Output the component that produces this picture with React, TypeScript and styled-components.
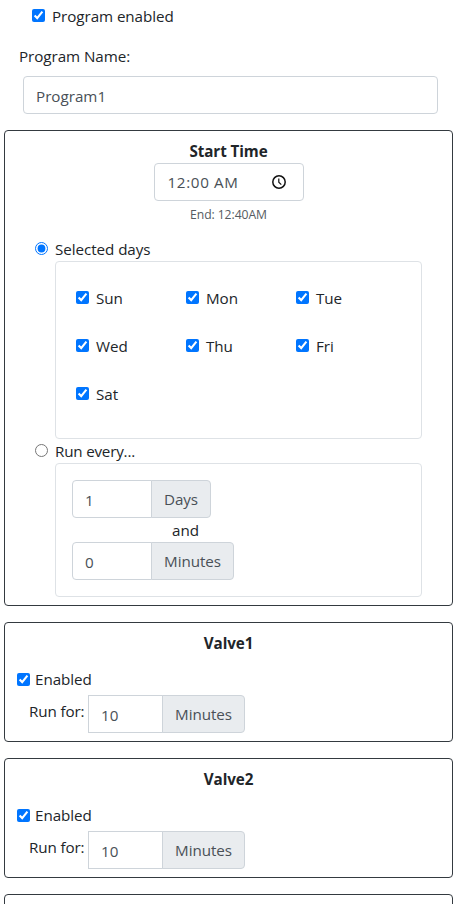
import React from "react";
import styled, { createGlobalStyle } from "styled-components";

const GlobalStyle = createGlobalStyle`
  *, *::before, *::after { box-sizing: border-box; }
  html { overflow: hidden; }
  body {
    margin: 0;
    height: 904px;
    overflow: hidden;
    background: #fff;
    color: #212529;
    font-family: "Open Sans", "Noto Sans", sans-serif;
    font-size: 15.2px;
    line-height: 24px;
  }
`;

const Page = styled.main`
  display: flex;
  flex-direction: column;
  width: 457px;
  height: 904px;
  overflow: hidden;
  padding: 4px 4px 0;
`;

const Label = styled.span<{ $spacing?: number }>`
  height: 24px;
  white-space: nowrap;
  letter-spacing: ${(p) => p.$spacing ?? -0.06}px;
`;

const Check = styled.input<{ $top?: number }>`
  flex: none;
  width: 13px;
  height: 13px;
  margin: ${(p) => p.$top ?? 5}px 0 0;
`;

const CheckRow = styled.label<{ $gap?: number }>`
  display: flex;
  align-items: flex-start;
  gap: ${(p) => p.$gap ?? 7}px;
  height: 24px;
`;

const ProgramHeader = styled.header`
  display: flex;
  flex-direction: column;
  padding: 0 15px;
  margin-bottom: 16px;

  ${CheckRow} { padding-left: 13px; }
`;

const NameLabel = styled.label`
  margin: 16px 0 8px;
  white-space: nowrap;
  letter-spacing: -0.05px;
`;

const NameInput = styled.input`
  width: 415px;
  height: 38px;
  margin-left: 4px;
  padding: 1px 12px 0;
  border: 1px solid #ced4da;
  border-radius: 4px;
  color: #495057;
  font: inherit;
`;

const Card = styled.section<{ $height: number }>`
  flex: none;
  width: 449px;
  height: ${(p) => p.$height}px;
  margin-bottom: 16px;
  padding-top: 8px;
  border: 1px solid #343a40;
  border-radius: 4px;
`;

const Title = styled.h2`
  margin: 0;
  font-size: 15.2px;
  font-weight: 700;
  line-height: 24px;
  text-align: center;
  letter-spacing: -0.08px;
`;

const TimeField = styled.div`
  display: flex;
  align-items: center;
  justify-content: space-between;
  width: 150px;
  height: 38px;
  margin: 0 auto;
  padding: 0 17px 0 13px;
  border: 1px solid #ced4da;
  border-radius: 4px;
  color: #495057;
`;

const EndTime = styled.div`
  height: 24px;
  margin: 2px 0 10px;
  text-align: center;
  font-size: 12.2px;
  letter-spacing: -0.08px;
  color: #555b61;
`;

const Schedule = styled.div`
  display: flex;
  flex-direction: column;
  padding-left: 30px;
`;

const Panel = styled.div<{ $height: number }>`
  width: 367px;
  height: ${(p) => p.$height}px;
  margin-left: 20px;
  border: 1px solid #dee2e6;
  border-radius: 4px;
`;

const DayGrid = styled.div`
  display: grid;
  grid-template-columns: repeat(3, 110px);
  grid-auto-rows: 48px;
  padding: 24px 0 0 20px;
`;

const Interval = styled.div`
  display: flex;
  flex-direction: column;
  width: 260px;
  padding: 16px;
`;

const Conjunction = styled.div`
  width: 227px;
  height: 24px;
  text-align: center;
`;

const InputGroup = styled.div`
  display: flex;
  height: 38px;
`;

const NumberInput = styled.input<{ $width: number; $square?: boolean }>`
  width: ${(p) => p.$width}px;
  height: 38px;
  padding: 1px 12px 0;
  border: 1px solid #ced4da;
  border-radius: ${(p) => (p.$square ? "0" : "4px 0 0 4px")};
  color: #495057;
  font: inherit;
`;

const Unit = styled.span<{ $width: number }>`
  display: flex;
  align-items: center;
  justify-content: center;
  width: ${(p) => p.$width}px;
  height: 38px;
  margin-left: -1px;
  padding-bottom: 1px;
  background: #e9ecef;
  border: 1px solid #ced4da;
  border-radius: 0 4px 4px 0;
  color: #495057;
`;

const ValveBody = styled.div`
  display: flex;
  flex-direction: column;
  padding: 12px 0 0 12px;
`;

const RunRow = styled.div`
  display: flex;
  height: 38px;
  margin-top: 4px;
  padding-left: 12px;
`;

const RunLabel = styled.label`
  width: 59px;
  padding-top: 4px;
  white-space: nowrap;
  letter-spacing: -0.12px;
`;

const ClockIcon = () => (
  <svg width="14" height="14" viewBox="0 0 14 14" fill="none" stroke="#111">
    <circle cx="7" cy="7" r="6.2" strokeWidth="1.5" />
    <path d="M6.8 3.4V7.3L9.3 9.6" strokeWidth="1.2" />
  </svg>
);

const DAYS = ["Sun", "Mon", "Tue", "Wed", "Thu", "Fri", "Sat"];

function Valve({ name }: { name: string }) {
  return (
    <Card $height={120}>
      <Title>{name}</Title>
      <ValveBody>
        <CheckRow $gap={5}>
          <Check type="checkbox" defaultChecked $top={6} />
          <Label>Enabled</Label>
        </CheckRow>
        <RunRow>
          <RunLabel>Run for:</RunLabel>
          <InputGroup>
            <NumberInput $width={75} $square defaultValue="10" />
            <Unit $width={83}>
              <Label>Minutes</Label>
            </Unit>
          </InputGroup>
        </RunRow>
      </ValveBody>
    </Card>
  );
}

export default function App() {
  return (
    <>
      <GlobalStyle />
      <Page>
        <ProgramHeader>
          <CheckRow>
            <Check type="checkbox" defaultChecked />
            <Label>Program enabled</Label>
          </CheckRow>
          <NameLabel htmlFor="name">Program Name:</NameLabel>
          <NameInput id="name" defaultValue="Program1" />
        </ProgramHeader>
        <Card $height={476}>
          <Title>Start Time</Title>
          <TimeField>
            <Label $spacing={0.65}>12:00 AM</Label>
            <ClockIcon />
          </TimeField>
          <EndTime>End: 12:40AM</EndTime>
          <Schedule>
            <CheckRow>
              <Check type="radio" name="schedule" defaultChecked />
              <Label>Selected days</Label>
            </CheckRow>
            <Panel $height={178}>
              <DayGrid>
                {DAYS.map((day) => (
                  <CheckRow key={day}>
                    <Check type="checkbox" defaultChecked />
                    <Label>{day}</Label>
                  </CheckRow>
                ))}
              </DayGrid>
            </Panel>
            <CheckRow>
              <Check type="radio" name="schedule" />
              <Label $spacing={-0.2}>Run every...</Label>
            </CheckRow>
            <Panel $height={134}>
              <Interval>
                <InputGroup>
                  <NumberInput $width={80} defaultValue="1" />
                  <Unit $width={60}>
                    <Label>Days</Label>
                  </Unit>
                </InputGroup>
                <Conjunction>and</Conjunction>
                <InputGroup>
                  <NumberInput $width={80} defaultValue="0" />
                  <Unit $width={83}>
                    <Label>Minutes</Label>
                  </Unit>
                </InputGroup>
              </Interval>
            </Panel>
          </Schedule>
        </Card>
        <Valve name="Valve1" />
        <Valve name="Valve2" />
        <Card $height={120} />
      </Page>
    </>
  );
}
